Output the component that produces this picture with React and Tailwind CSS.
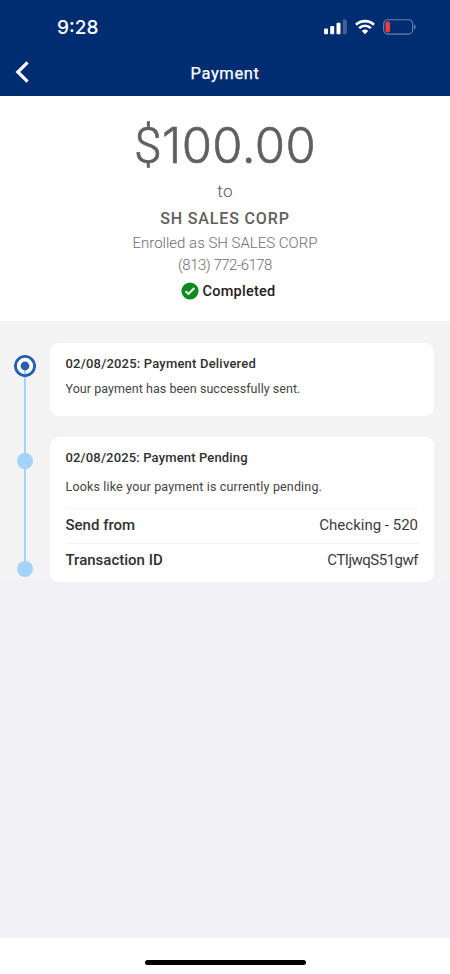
const SignalIcon = () => (
  <svg width="24" height="16" viewBox="0 0 24 16" fill="white">
    <rect x="1" y="9.5" width="4" height="5.7" rx="1" />
    <rect x="7.2" y="6.9" width="4" height="8.3" rx="1" />
    <rect x="13.5" y="3.7" width="4" height="11.5" rx="1" />
    <rect x="19.8" y="0.6" width="4" height="14.6" rx="1" fillOpacity="0.25" />
  </svg>
);

const WifiIcon = () => (
  <svg width="20" height="16" viewBox="0 0 20 16" fill="none" stroke="white" strokeWidth="2.7">
    <path d="M1 5.7a13 13 0 0 1 18 0" />
    <path d="M4.2 9.1a8.3 8.3 0 0 1 11.6 0" />
    <path d="M10 15.2 6.8 12a4.7 4.7 0 0 1 6.4 0z" fill="white" stroke="none" />
  </svg>
);

const BatteryIcon = () => (
  <svg width="34" height="16" viewBox="0 0 34 16">
    <rect x="0.7" y="0.7" width="29" height="14.4" rx="4.4" fill="none" stroke="white" strokeOpacity="0.42" strokeWidth="1.1" />
    <rect x="2.4" y="2.4" width="4.7" height="11" rx="1.8" fill="#f03c3c" />
    <path d="M31.2 5.4c1.9.7 1.9 4.3 0 5z" fill="white" fillOpacity="0.45" />
  </svg>
);

const Header = () => (
  <header className="h-[95.5px] bg-[#002d72] text-white">
    <div className="flex h-[52px] items-center justify-between pt-px pl-[57px] pr-[33px]">
      <span className="pt-px font-['Inter'] text-[19px] leading-none font-medium">9:28</span>
      <div className="flex items-center gap-[8px]">
        <SignalIcon />
        <WifiIcon />
        <BatteryIcon />
      </div>
    </div>
    <div className="grid h-[42px] grid-cols-[60px_1fr_60px] items-center">
      <button aria-label="Back" className="-mt-[2px] pl-[15px]">
        <svg width="15" height="22" viewBox="0 0 15 22" fill="none" stroke="white" strokeWidth="3.2">
          <path d="M12.6 1.4 2.8 11l9.8 9.6" />
        </svg>
      </button>
      <h1 className="pt-[2px] text-center text-[16.5px] tracking-[0.6px] [-webkit-text-stroke:0.25px]">Payment</h1>
    </div>
  </header>
);

const Summary = () => (
  <section className="flex h-[225.5px] flex-col items-center bg-white text-[#6e6e6e]">
    <p className="mt-[19px] h-[62px] font-['Inter'] text-[49px] leading-[62px] font-light tracking-[0.4px] text-[#606060] [-webkit-text-stroke:0.6px]">
      <span className="font-['Roboto'] text-[50px]">$</span>100.00
    </p>
    <p className="mt-[3px] text-[17px] leading-[22px] font-light tracking-[0.4px] text-[#555]">to</p>
    <p className="mt-[5px] text-[16px] leading-[24px] font-medium tracking-[0.85px] text-[#606060]">SH SALES CORP</p>
    <p className="mt-px text-[15px] leading-[22px] font-light">Enrolled as SH SALES CORP</p>
    <p className="text-[15px] leading-[22px] font-light tracking-[-0.5px]">(813) 772-6178</p>
    <div className="mt-[5px] flex h-[22px] items-center gap-[4px] pl-[6px]">
      <svg className="-mt-px" width="18" height="18" viewBox="0 0 18 18" fill="none">
        <circle cx="9" cy="9" r="8.6" fill="#0a8a1f" />
        <path d="M4.5 9.2 7.5 12l5.8-6" stroke="white" strokeWidth="1.9" />
      </svg>
      <span className="text-[14.5px] font-medium tracking-[0.25px] text-[#222]">Completed</span>
    </div>
  </section>
);

const Rail = () => (
  <div className="flex h-[223px] w-[22px] flex-col items-center">
    <svg className="shrink-0" width="22" height="22" viewBox="0 0 22 22">
      <circle cx="11" cy="11" r="9.6" fill="white" stroke="#255fb0" strokeWidth="2.9" />
      <path d="M11 12v7" stroke="#a3d3fb" strokeWidth="2" />
      <circle cx="11" cy="11" r="4.4" fill="#255fb0" />
    </svg>
    <div className="h-[76px] w-[2px] bg-[#a3d3fb]" />
    <div className="size-[16px] rounded-full bg-[#a3d3fb]" />
    <div className="h-[92px] w-[2px] bg-[#a3d3fb]" />
    <div className="size-[16px] rounded-full bg-[#a3d3fb]" />
  </div>
);

const DetailRow = ({ label, children }) => (
  <div className="flex h-[35px] items-center justify-between border-t border-[#f3f3f3] text-[15px]">
    <span className="font-medium">{label}</span>
    {children}
  </div>
);

const Timeline = () => (
  <section className="flex h-[259px] bg-[#f3f3f3] pt-[21.5px] pr-[16px] pl-[13.5px] text-[#303030]">
    <div className="pt-[12px]">
      <Rail />
    </div>
    <div className="ml-[14px] flex flex-1 flex-col gap-[21.5px]">
      <article className="h-[73px] shrink-0 rounded-[9px] bg-white px-[16px] pt-[11px]">
        <h2 className="text-[13px] leading-[20px] font-medium tracking-[0.2px]">02/08/2025: Payment Delivered</h2>
        <p className="mt-[5px] text-[12.5px] leading-[20px] tracking-[0.05px] text-[#444]">Your payment has been successfully sent.</p>
      </article>
      <article className="h-[145px] shrink-0 rounded-[9px] bg-white px-[16px] pt-[11px]">
        <h2 className="text-[13px] leading-[20px] font-medium tracking-[0.15px]">02/08/2025: Payment Pending</h2>
        <p className="mt-[9px] mb-[10.5px] text-[12.5px] leading-[20px] tracking-[0.16px] text-[#444]">Looks like your payment is currently pending.</p>
        <DetailRow label="Send from">
          <span className="text-[#3c3c3c]">Checking - 520</span>
        </DetailRow>
        <DetailRow label="Transaction ID">
          <span className="tracking-[-0.5px] text-[#3c3c3c]">CTIjwqS51gwf</span>
        </DetailRow>
      </article>
    </div>
  </section>
);

export default function App() {
  return (
    <div className="flex h-[974px] w-[450px] flex-col overflow-hidden bg-[#f2f1f6] font-['Roboto',sans-serif]">
      <Header />
      <Summary />
      <Timeline />
      <footer className="mt-auto flex h-[36px] justify-center bg-white pt-[22px]">
        <div className="h-[5px] w-[161px] rounded-full bg-black" />
      </footer>
    </div>
  );
}
